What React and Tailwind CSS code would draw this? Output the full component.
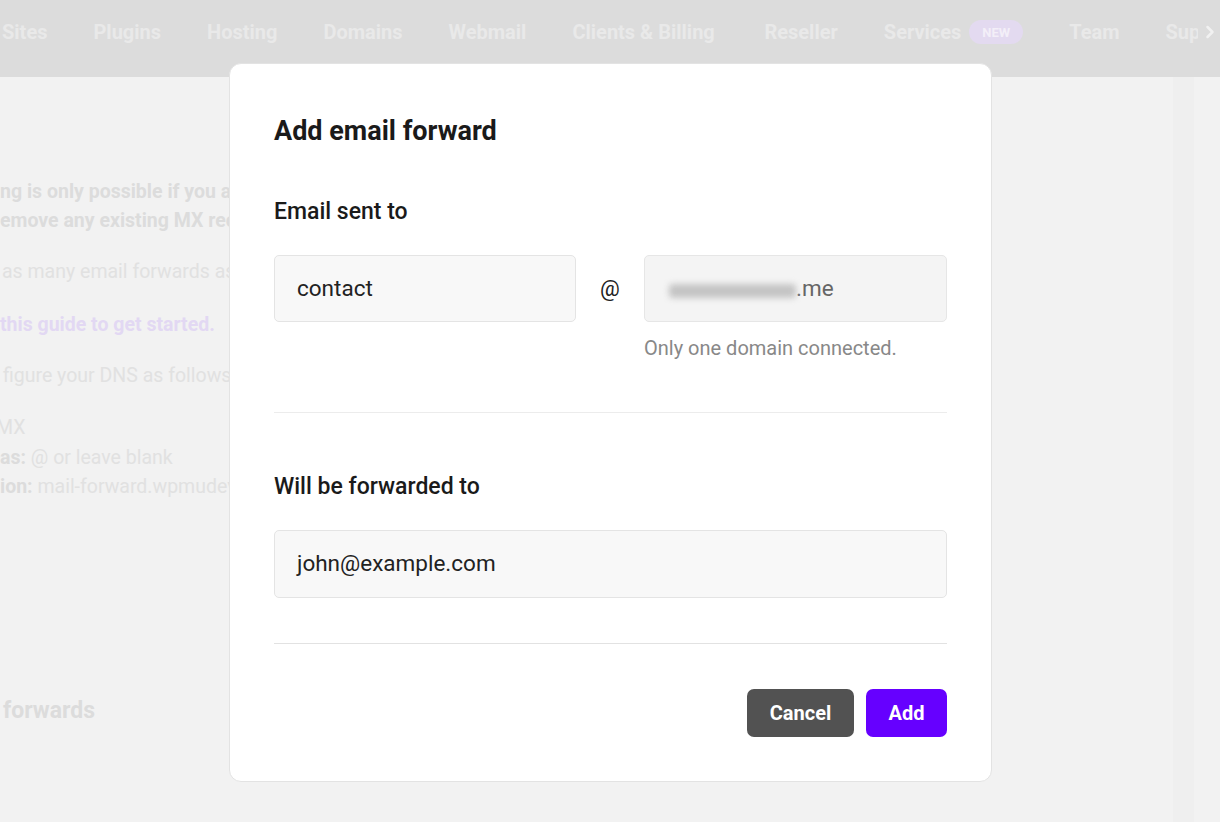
import { ChevronRight } from 'lucide-react'

const nav = ['Sites', 'Plugins', 'Hosting', 'Domains', 'Webmail']

export default function App() {
  return (
    <div className="relative w-[1220px] h-[822px] overflow-hidden bg-[#f2f2f2] font-['Roboto',sans-serif]">
      {/* dimmed top nav */}
      <div className="relative h-[77px] bg-[#dcdcdc] flex items-start pt-[18px] leading-7 pl-[2px] gap-[46px] text-[20px] font-bold text-[#e9e9e9] whitespace-nowrap overflow-hidden">
        {nav.map(n => <span key={n} className="shrink-0">{n}</span>)}
        <span className="shrink-0 w-[146px]">Clients &amp; Billing</span>
        <span className="shrink-0">Reseller</span>
        <span className="shrink-0 flex items-center gap-2">
          Services
          <span className="px-[13px] h-[24px] flex items-center rounded-full bg-[#e3daf0] text-[13px] leading-none text-[#f3eff8]">NEW</span>
        </span>
        <span className="shrink-0">Team</span>
        <span className="shrink-0">Support</span>
        <div className="absolute right-0 top-0 h-full w-[22px] bg-[#dcdcdc] flex items-start pt-[21px] justify-center">
          <ChevronRight size={22} strokeWidth={3} className="text-[#f1f1f1] ml-[2px]" />
        </div>
      </div>

      {/* dimmed page body */}
      <div className="flex">
        <div className="w-[700px] overflow-hidden text-[19.5px] whitespace-nowrap text-[#e1e1e1]">
          <div className="mt-[100px] leading-[29px] font-bold text-[#dcdcdc]">
            <p>ng is only possible if you are using our DNS service.</p>
            <p>emove any existing MX records before you continue.</p>
          </div>
          <p className="mt-[22px] leading-[29px] ml-[2px]">as many email forwards as you need for each domain.</p>
          <p className="mt-[24px] leading-[29px] font-bold text-[#e2d8f3]">this guide to get started.</p>
          <p className="mt-[22px] leading-[29px] ml-[3px]">figure your DNS as follows:</p>
          <div className="mt-[23px] leading-[29.5px]">
            <p className="-ml-[4px]">MX</p>
            <p><span className="font-bold text-[#dcdcdc]">as:</span> @ or leave blank</p>
            <p><span className="font-bold text-[#dcdcdc]">ion:</span> mail-forward.wpmudev.host</p>
          </div>
          <p className="mt-[194px] leading-[30px] text-[23px] font-bold text-[#dcdcdc] ml-[3px]">forwards</p>
        </div>
        <div className="flex-1" />
        <div className="w-[21px] h-[745px] bg-[#efefef]" />
        <div className="w-[26px]" />
      </div>

      {/* modal */}
      <div className="absolute left-[229px] top-[63px] w-[763px] bg-white border border-[#e3e3e3] rounded-[12px] px-[44px] pt-[51px] pb-[44px] text-[#1a1a1a]">
        <h2 className="text-[27px] leading-8 font-bold">Add email forward</h2>

        <h3 className="mt-[51px] text-[23px] leading-7 font-medium">Email sent to</h3>
        <div className="mt-[29px] flex items-start">
          <div className="w-[302px] h-[67px] rounded-[5px] border border-[#e4e4e4] bg-[#f8f8f8] flex items-center px-[22px] text-[22.5px] text-[#222]">
            contact
          </div>
          <div className="w-[68px] h-[67px] flex items-center justify-center text-[22px] text-[#222]">@</div>
          <div className="flex-1">
            <div className="h-[67px] rounded-[5px] border border-[#e6e6e6] bg-[#f4f4f4] flex items-center pl-[24px] text-[22.5px] text-[#666]">
              <span className="w-[127px] h-[14px] bg-[#c4c4c4] blur-[3px] rounded-sm mt-[4px]" />
              <span>.me</span>
            </div>
            <p className="mt-[14px] text-[20px] leading-6 text-[#888]">Only one domain connected.</p>
          </div>
        </div>

        <div className="mt-[52px] h-px bg-[#ececec]" />

        <h3 className="mt-[60px] text-[23px] leading-7 font-medium">Will be forwarded to</h3>
        <div className="mt-[29px] h-[68px] rounded-[5px] border border-[#e4e4e4] bg-[#f8f8f8] flex items-center px-[22px] text-[22.5px] text-[#222]">
          john@example.com
        </div>

        <div className="mt-[45px] h-px bg-[#e2e2e2]" />

        <div className="mt-[45px] flex justify-end gap-3">
          <button className="h-[48px] w-[107px] rounded-[7px] bg-[#525252] text-white text-[20px] font-bold">Cancel</button>
          <button className="h-[48px] w-[81px] rounded-[7px] bg-[#6600ff] text-white text-[20px] font-bold">Add</button>
        </div>
      </div>
    </div>
  )
}
